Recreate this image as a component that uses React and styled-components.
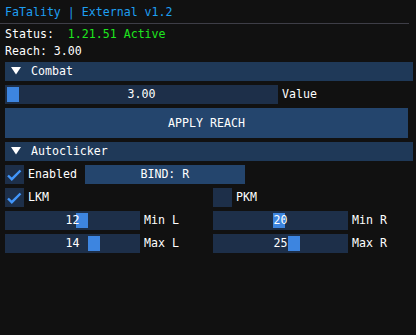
import styled, { createGlobalStyle } from "styled-components";

const GlobalStyle = createGlobalStyle`
  html, body {
    margin: 0;
    padding: 0;
    background: #111111;
  }
  body {
    font-family: "DejaVu Sans Mono", "Liberation Mono", monospace;
    font-size: 11.6px;
    line-height: 13px;
    color: #ffffff;
  }
`;

const Window = styled.main`
  width: 416px;
  height: 335px;
  box-sizing: border-box;
  padding: 6px 0 0 5px;
  background: #111111;
  display: flex;
  flex-direction: column;
  gap: 4px;
  overflow: hidden;
`;

const Text = styled.div`
  height: 13px;
  white-space: pre;
  color: ${(p) => p.$color || "#ffffff"};
`;

const Separator = styled.div`
  height: 1px;
  width: 409px;
  margin-left: -5px;
  background: #3e3e47;
`;

const Header = styled.div`
  width: 408px;
  height: 19px;
  background: #1f3958;
  display: flex;
  align-items: flex-start;
  gap: 10px;
  padding-top: 3px;
  box-sizing: border-box;

  svg {
    margin: 2px 0 0 6px;
  }
`;

const Row = styled.div`
  display: flex;
  align-items: flex-start;
  height: ${(p) => p.$h || 19}px;
`;

const Columns = styled.div`
  display: grid;
  grid-template-columns: 208px 1fr;
  height: 19px;
`;

const Label = styled.span`
  margin-left: 4px;
  padding-top: 3px;
  white-space: pre;
`;

const SliderFrame = styled.div`
  position: relative;
  width: ${(p) => p.$w}px;
  height: 19px;
  background: #1d2f49;
  flex: none;
`;

const Grab = styled.div`
  position: absolute;
  top: 2px;
  width: 12px;
  height: 15px;
  background: #3d85e0;
`;

const SliderValue = styled.div`
  position: absolute;
  inset: 3px 0 0 0;
  text-align: center;
  white-space: pre;
`;

const Button = styled.div`
  width: ${(p) => p.$w}px;
  height: ${(p) => p.$h}px;
  margin-left: ${(p) => p.$ml || 0}px;
  background: #24456d;
  display: flex;
  align-items: center;
  justify-content: center;
  flex: none;
`;

const Box = styled.div`
  width: 19px;
  height: 19px;
  background: #1d2f49;
  flex: none;

  svg {
    display: block;
  }
`;

const Arrow = () => (
  <svg width="10" height="8" viewBox="0 0 10 8">
    <polygon points="0,0 10,0 5,7.5" fill="#ffffff" />
  </svg>
);

const Slider = ({ width, value, min, max, text }) => {
  const left = 2 + ((value - min) / (max - min)) * (width - 16);
  return (
    <SliderFrame $w={width}>
      <Grab style={{ left: Math.round(left) }} />
      <SliderValue>{text}</SliderValue>
    </SliderFrame>
  );
};

const Checkbox = ({ checked, label }) => (
  <Row>
    <Box>
      {checked && (
        <svg width="19" height="19" viewBox="0 0 19 19">
          <polyline
            points="3,10.5 6.8,14.2 15.5,5.5"
            fill="none"
            stroke="#4296fa"
            strokeWidth="2.4"
          />
        </svg>
      )}
    </Box>
    <Label>{label}</Label>
  </Row>
);

const SliderRow = ({ label, ...rest }) => (
  <Row>
    <Slider width={135} {...rest} />
    <Label>{label}</Label>
  </Row>
);

export default function App() {
  return (
    <>
      <GlobalStyle />
      <Window>
        <Text $color="#1e9ff2">FaTality | External v1.2</Text>
        <Separator />
        <Text>
          {"Status:  "}
          <span style={{ color: "#1ee61e" }}>1.21.51 Active</span>
        </Text>
        <Text>Reach: 3.00</Text>

        <Header>
          <Arrow />
          <span>Combat</span>
        </Header>
        <Row>
          <Slider width={273} value={3} min={3} max={6} text="3.00" />
          <Label>Value</Label>
        </Row>
        <Button $w={403} $h={30}>APPLY REACH</Button>

        <Header>
          <Arrow />
          <span>Autoclicker</span>
        </Header>
        <Row>
          <Checkbox checked label="Enabled" />
          <Button $w={160} $h={19} $ml={8}>BIND: R</Button>
        </Row>
        <Columns>
          <Checkbox checked label="LKM" />
          <Checkbox label="PKM" />
        </Columns>
        <Columns>
          <SliderRow label="Min L" value={12} min={1} max={20} text="12" />
          <SliderRow label="Min R" value={20} min={1} max={40} text="20" />
        </Columns>
        <Columns>
          <SliderRow label="Max L" value={14} min={1} max={20} text="14" />
          <SliderRow label="Max R" value={25} min={1} max={40} text="25" />
        </Columns>
      </Window>
    </>
  );
}
